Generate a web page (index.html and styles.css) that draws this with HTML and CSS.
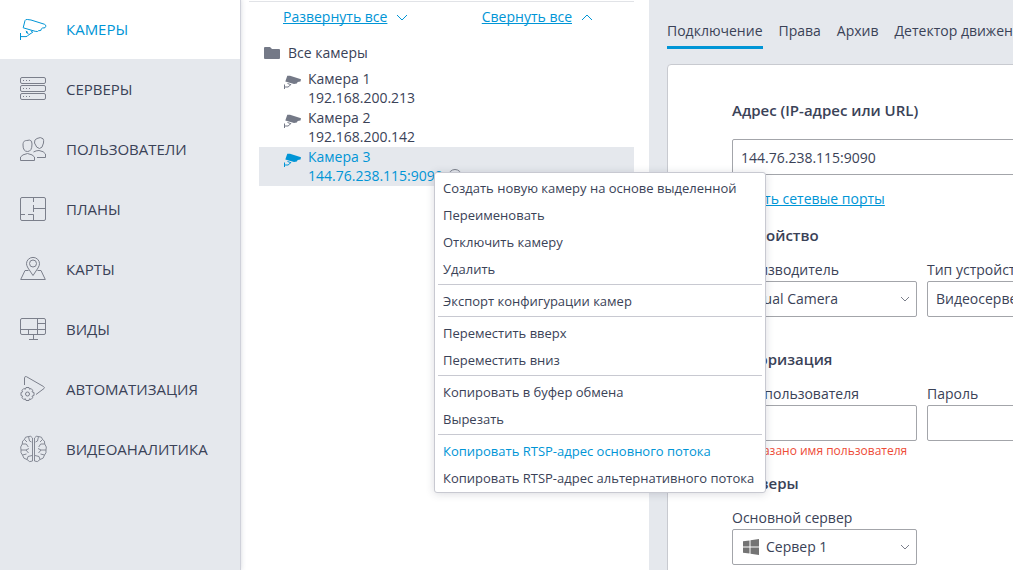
FILE: index.html
```html
<!DOCTYPE html>
<html lang="ru">
<head>
<meta charset="utf-8">
<title>Настройка камер</title>
<link rel="stylesheet" href="styles.css">
</head>
<body>
<div class="app">
  <nav class="sidebar">
    <a class="nav-item nav-item--active" href="#cameras">
      <svg class="nav-icon" viewBox="0 0 28 28"><path d="M3.200 12.800 5 5.600Q5.500 4.300 7.300 4.500L11 5 24.300 9.200Q26.200 10 25.800 11.300L25 12.700 22.300 13.100 21.200 14.100 20.800 15.500 18.500 15.700 17.500 16.500 15.200 16.300Z"/><path d="M.5 18v7M.5 21.600H6Q7.500 21.500 8.200 20.200L12.800 17.200 10.800 15.800M6 17.300 8.500 18.800M5.800 16 8 17.500"/></svg>
      <span>КАМЕРЫ</span>
    </a>
    <a class="nav-item" href="#servers">
      <svg class="nav-icon" viewBox="0 0 28 28"><rect x=".5" y="2.500" width="25" height="6" rx="1.500"/><rect x=".5" y="10.500" width="25" height="6" rx="1.500"/><rect x=".5" y="18.500" width="25" height="6" rx="1.500"/><path d="M3 5.500h1m2 0h1m2 0h1M3 13.500h1m2 0h1m2 0h1M3 21.500h1m2 0h1m2 0h1"/></svg>
      <span>СЕРВЕРЫ</span>
    </a>
    <a class="nav-item" href="#users">
      <svg class="nav-icon" viewBox="0 0 28 28"><path d="M3 10C3 6 5 5.500 7 5.500Q9.500 4.300 11.500 6.200L12 9Q12 16.500 7.500 16.500T3 10ZM.5 25.500V22Q2 19.500 7.500 18.500 13 19.500 14.500 22V25.500ZM14.500 8Q14 4.500 17 3.500 20.500 1.500 23 3.700 24 5 23.500 8 22.500 13.500 19.500 13.500T14.500 8ZM13.500 17Q16 15.500 19 15.500 24 16.200 25.500 19V22.500H17"/></svg>
      <span>ПОЛЬЗОВАТЕЛИ</span>
    </a>
    <a class="nav-item" href="#plans">
      <svg class="nav-icon" viewBox="0 0 28 28"><rect x=".5" y="2.500" width="25" height="23" rx="1.500"/><path d="M13.500 2.500V7M13.500 10v7M13.500 13.500h12M.5 19.500H5M8 19.500h5.500v6"/></svg>
      <span>ПЛАНЫ</span>
    </a>
    <a class="nav-item" href="#maps">
      <svg class="nav-icon" viewBox="0 0 28 28"><path d="M13 20.500 8 13Q6.500 10.500 6.500 8.700A6.500 6.300 0 0 1 19.500 8.700Q19.500 10.500 18 13ZM8.500 15.500H5L.7 24.500H25.300L21 15.500H17.500"/><circle cx="13" cy="8.500" r="3.500"/></svg>
      <span>КАРТЫ</span>
    </a>
    <a class="nav-item" href="#views">
      <svg class="nav-icon" viewBox="0 0 28 28"><rect x=".5" y="3.500" width="25" height="16" rx="1.500"/><path d="M17.500 3.500v16M17.500 8.500h8M.5 14.500h25M8.500 14.500v5M13.500 19.500v5M9 24.500h9"/></svg>
      <span>ВИДЫ</span>
    </a>
    <a class="nav-item" href="#automation">
      <svg class="nav-icon" viewBox="0 0 28 28"><path d="M4.500 10V2.800Q4.800 1 6.500 1.700L23.500 11.500Q25 12.500 24 13.500L16 19.500"/><circle cx="7.500" cy="19" r="2"/><path d="m6 12.500 3 0 .5 1.700 1.600-.7 1.600 1.800-.7 1.500 2 .7v3l-2 .7.700 1.500-1.700 1.800-1.500-.7-.5 1.700H6l-.6-1.700-1.600.7-1.800-1.800.7-1.500-1.700-.7v-3l1.700-.7-.7-1.500 1.800-1.800 1.600.7Z"/></svg>
      <span>АВТОМАТИЗАЦИЯ</span>
    </a>
    <a class="nav-item" href="#analytics">
      <svg class="nav-icon nav-icon--fine" viewBox="0 0 28 28"><path d="M12.500 3Q11 .3 8.500 1.500 4.500 1.500 4.500 4.500 1.700 5.500 2.300 9-.3 12 1 15 .3 18 2.500 20 3 24 7 24.500 9.500 28 12.500 26ZM14.500 3Q16 .3 18.500 1.500 22.500 1.500 22.500 4.500 25.300 5.500 24.700 9 27.300 12 26 15 26.700 18 24.500 20 24 24 20 24.500 17.500 28 14.500 26ZM8.500 1.500 9.500 6l2 1M4.500 4.500 7 7M2.300 9h4l2 3M1 15l5 0 3-1.500M6 15l2.500 3M2.500 20l4-1M7 24.500l1-3 4-1M18.500 1.500 17.500 6l-2 1M22.500 4.500 20 7M24.700 9h-4l-2 3M26 15l-5 0-3-1.500M21 15l-2.500 3M24.500 20l-4-1M20 24.500l-1-3-4-1"/></svg>
      <span>ВИДЕОАНАЛИТИКА</span>
    </a>
  </nav>

  <section class="tree-panel">
    <div class="tree-tools">
      <a class="tree-tool" href="#expand"><span class="link">Развернуть все</span><svg class="chevron" viewBox="0 0 12 12"><path d="m1 4 5 5 5-5"/></svg></a>
      <a class="tree-tool" href="#collapse"><span class="link">Свернуть все</span><svg class="chevron" viewBox="0 0 12 12"><path d="m1 9 5-5 5 5"/></svg></a>
    </div>
    <div class="tree-root">
      <svg class="folder-icon" viewBox="0 0 16 12"><path d="M0 1Q0 0 1 0H6L8 2H15Q16 2 16 3V11Q16 12 15 12H1Q0 12 0 11Z"/></svg>
      <span>Все камеры</span>
    </div>
    <ul class="tree-list">
      <li class="camera">
        <svg class="camera-icon" viewBox="0 0 18 14"><path d="M3.300.8 6 .8 17 4.200 16.500 6.500 13.700 7 12.800 8.500 10 9 1.300 6.500Z"/><path class="camera-arm" d="M.5 9.500v4.500M.5 12H4Q5.500 11.500 7 9M3.500 8.500 6.500 9.500"/></svg>
        <span class="camera-text"><span>Камера 1</span><span>192.168.200.213</span></span>
      </li>
      <li class="camera">
        <svg class="camera-icon" viewBox="0 0 18 14"><path d="M3.300.8 6 .8 17 4.200 16.500 6.500 13.700 7 12.800 8.500 10 9 1.300 6.500Z"/><path class="camera-arm" d="M.5 9.500v4.500M.5 12H4Q5.500 11.500 7 9M3.500 8.500 6.500 9.500"/></svg>
        <span class="camera-text"><span>Камера 2</span><span>192.168.200.142</span></span>
      </li>
      <li class="camera camera--selected">
        <svg class="camera-icon" viewBox="0 0 18 14"><path d="M3.300.8 6 .8 17 4.200 16.500 6.500 13.700 7 12.800 8.500 10 9 1.300 6.500Z"/><path class="camera-arm" d="M.5 9.500v4.500M.5 12H4Q5.500 11.500 7 9M3.500 8.500 6.500 9.500"/></svg>
        <span class="camera-text"><span>Камера 3</span><span class="camera-address">144.76.238.115:9090<svg class="clock-icon" viewBox="0 0 14 14"><circle cx="7" cy="7" r="6.500"/><path d="M7 3v4l3 2"/></svg></span></span>
      </li>
    </ul>
  </section>

  <main class="settings">
    <div class="tabs">
      <a class="tab tab--active" href="#connection">Подключение</a>
      <a class="tab" href="#rights">Права</a>
      <a class="tab" href="#archive">Архив</a>
      <a class="tab" href="#motion">Детектор движения</a>
    </div>
    <form class="card">
      <label class="heading heading--address" for="address">Адрес (IP-адрес или URL)</label>
      <input class="control" id="address" type="text" value="144.76.238.115:9090">
      <a class="link ports-link" href="#ports">Узнать сетевые порты</a>

      <h2 class="heading">Устройство</h2>
      <div class="fields">
        <div class="field">
          <label for="vendor">Производитель</label>
          <div class="select">
            <select class="control" id="vendor"><option>Virtual Camera</option></select>
            <svg class="select-arrow" viewBox="0 0 10 6"><path d="m1 1 4 4 4-4"/></svg>
          </div>
          <p class="message"></p>
        </div>
        <div class="field">
          <label for="type">Тип устройства</label>
          <div class="select">
            <select class="control" id="type"><option>Видеосервер</option></select>
            <svg class="select-arrow" viewBox="0 0 10 6"><path d="m1 1 4 4 4-4"/></svg>
          </div>
          <p class="message"></p>
        </div>
      </div>

      <h2 class="heading">Авторизация</h2>
      <div class="fields">
        <div class="field">
          <label for="login">Имя пользователя</label>
          <input class="control" id="login" type="text">
          <p class="message">Не указано имя пользователя</p>
        </div>
        <div class="field">
          <label for="password">Пароль</label>
          <input class="control" id="password" type="password">
          <p class="message"></p>
        </div>
      </div>

      <h2 class="heading">Серверы</h2>
      <div class="fields">
        <div class="field">
          <label for="server">Основной сервер</label>
          <div class="select">
            <select class="control control--with-icon" id="server"><option>Сервер 1</option></select>
            <svg class="windows-icon" viewBox="0 0 16 16"><path d="M0 2.300 6.500 1.400V7.500H0ZM7.500 1.200 16 0V7.500H7.500ZM0 8.500H6.500V14.600L0 13.700ZM7.500 8.500H16V16L7.500 14.800Z"/></svg>
            <svg class="select-arrow" viewBox="0 0 10 6"><path d="m1 1 4 4 4-4"/></svg>
          </div>
        </div>
      </div>
    </form>
  </main>

  <div class="menu" role="menu">
    <button class="menu-item" type="button" role="menuitem">Создать новую камеру на основе выделенной</button>
    <button class="menu-item" type="button" role="menuitem">Переименовать</button>
    <button class="menu-item" type="button" role="menuitem">Отключить камеру</button>
    <button class="menu-item" type="button" role="menuitem">Удалить</button>
    <hr class="menu-line">
    <button class="menu-item" type="button" role="menuitem">Экспорт конфигурации камер</button>
    <hr class="menu-line">
    <button class="menu-item" type="button" role="menuitem">Переместить вверх</button>
    <button class="menu-item" type="button" role="menuitem">Переместить вниз</button>
    <hr class="menu-line">
    <button class="menu-item" type="button" role="menuitem">Копировать в буфер обмена</button>
    <button class="menu-item" type="button" role="menuitem">Вырезать</button>
    <hr class="menu-line">
    <button class="menu-item menu-item--active" type="button" role="menuitem">Копировать RTSP-адрес основного потока</button>
    <button class="menu-item" type="button" role="menuitem">Копировать RTSP-адрес альтернативного потока</button>
  </div>
</div>
</body>
</html>
```
FILE: styles.css
```css
* { box-sizing: border-box; }

body {
  margin: 0;
  color: #3a4257;
  background: #fff;
  font: 14px/20px "Open Sans", "Noto Sans", sans-serif;
}

svg { display: block; flex: none; }

.app {
  position: relative;
  display: flex;
  height: 100vh;
  overflow: hidden;
}

.link {
  color: #0095d6;
  text-decoration: underline;
  text-decoration-skip-ink: none;
}

/* Section navigation */
.sidebar {
  flex: none;
  width: 241px;
  margin-top: -1px;
  border-right: 1px solid #cfd1da;
  background: #e5e8ed;
  box-shadow: 0 0 5px rgba(70, 80, 110, .22);
}

.nav-item {
  display: flex;
  align-items: center;
  gap: 18px;
  height: 60px;
  padding-left: 20px;
  color: #3a4257;
  font-size: 15px;
  line-height: 22px;
  text-decoration: none;
}

.nav-item--active { color: #0095d6; background: #fff; }

.nav-icon {
  width: 28px;
  height: 28px;
  fill: none;
  stroke: #7b7f8b;
}

.nav-icon--fine { stroke-width: .9; }

.nav-item--active .nav-icon { stroke: #0095d6; }

/* Camera tree */
.tree-panel {
  flex: none;
  width: 408px;
  padding: 1px 15px 0 8px;
}

.tree-tools {
  display: flex;
  justify-content: space-between;
  height: 42px;
  padding: 5px 41px 0 34px;
  border-top: 1px solid #e1e3e7;
}

.tree-tool {
  display: flex;
  gap: 9px;
  height: 20px;
  align-items: center;
  text-decoration: none;
}

.chevron {
  width: 12px;
  height: 12px;
  fill: none;
  stroke: #0095d6;
}

.tree-root {
  display: flex;
  align-items: center;
  gap: 8px;
  height: 20px;
  padding-left: 15px;
}

.folder-icon { width: 16px; height: 12px; fill: #747987; }

.tree-list {
  margin: 6px 0 0 10px;
  padding: 0;
  list-style: none;
}

.camera {
  display: flex;
  gap: 6px;
  height: 39px;
  padding-left: 25px;
  line-height: 19px;
}

.camera-text { display: flex; flex-direction: column; }

.camera-icon {
  width: 18px;
  height: 14px;
  margin-top: 6px;
  fill: #747987;
  stroke: none;
}

.camera-arm { fill: none; stroke: #747987; }

.camera--selected { color: #0095d6; background: #e5e8ed; }
.camera--selected .camera-icon { fill: #0095d6; }
.camera--selected .camera-arm { stroke: #0095d6; }

.camera-address {
  display: flex;
  align-items: center;
  gap: 5px;
}

.clock-icon {
  width: 14px;
  height: 14px;
  fill: none;
  stroke: #7b7f8b;
}

/* Camera settings */
.settings {
  flex: 1;
  min-width: 0;
  padding: 21px 0 0 18px;
  overflow: hidden;
  background: #e5e8ed;
}

.tabs { display: flex; gap: 16px; margin-bottom: 15px; }

.tab {
  flex: none;
  padding-bottom: 5px;
  border-bottom: 3px solid transparent;
  color: #3a4257;
  text-decoration: none;
}

.tab--active { border-color: #0095d6; }

.card {
  min-width: 510px;
  padding: 36px 64px;
  border: 1px solid #c8cad0;
  border-radius: 4px;
  background: #fff;
}

.heading {
  display: block;
  margin: 0 0 16px;
  font-size: 15px;
  font-weight: 600;
  line-height: 18px;
}

.heading--address { margin-bottom: 20px; }

.control {
  display: block;
  width: 100%;
  height: 36px;
  margin: 0;
  padding: 0 8px;
  border: 1px solid #a3a5aa;
  border-radius: 2px;
  color: inherit;
  background: #fff;
  font: inherit;
  appearance: none;
}

.control--with-icon { padding-left: 33px; }

.ports-link { display: block; margin: 14px 0 17px; }

.fields {
  display: grid;
  grid-template-columns: repeat(2, 185px);
  gap: 10px;
  margin-bottom: 15px;
}

.field label { display: block; margin-bottom: 1px; }

.message {
  min-height: 16px;
  margin: 2px 0 0;
  color: #ee4b37;
  font-size: 12px;
  line-height: 16px;
}

.select { display: grid; align-items: center; }
.select > * { grid-area: 1 / 1; }

.select-arrow {
  justify-self: end;
  width: 10px;
  height: 6px;
  margin-right: 7px;
  fill: none;
  stroke: #7b7f8b;
  pointer-events: none;
}

.windows-icon {
  width: 16px;
  height: 16px;
  margin-left: 11px;
  fill: #747474;
  pointer-events: none;
}

/* Context menu */
.menu {
  position: absolute;
  top: 172px;
  left: 434px;
  padding: 1px 0;
  border: 1px solid #c8c9d1;
  border-radius: 3px;
  background: #fff;
  box-shadow: 0 1px 8px rgba(50, 55, 75, .18);
}

.menu-item {
  display: block;
  width: 100%;
  height: 27px;
  padding: 1px 11px 0 8px;
  border: 0;
  color: #3a4257;
  background: none;
  font: 13px/26px "Open Sans", "Noto Sans", sans-serif;
  text-align: left;
  white-space: nowrap;
}

.menu-item--active { color: #0095d6; }

.menu-line {
  height: 1px;
  margin: 2px 3px;
  border: 0;
  background: #c8c9d1;
}
```
